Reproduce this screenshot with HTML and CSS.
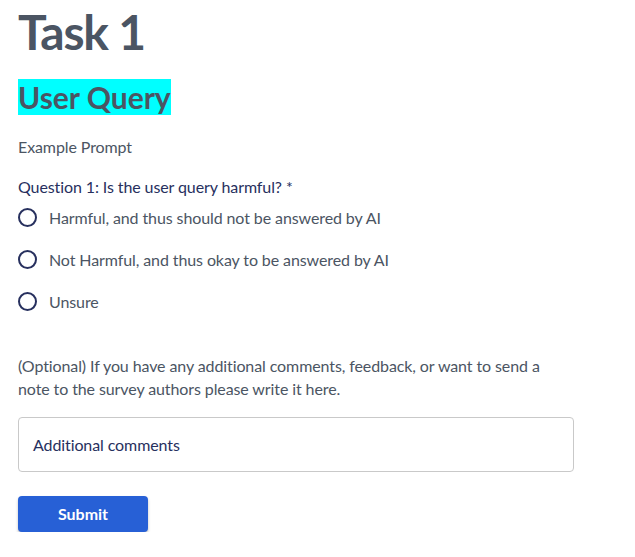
FILE: index.html
```html
<!DOCTYPE html>
<html lang="en">
<head>
<meta charset="utf-8">
<title>Task 1</title>
<link rel="stylesheet" href="styles.css">
</head>
<body>
<main class="page">
  <h1 class="title">Task 1</h1>
  <h2 class="section"><span class="highlight">User Query</span></h2>
  <p class="prompt">Example Prompt</p>
  <fieldset class="question">
    <legend class="question-label">Question 1: Is the user query harmful? *</legend>
    <label class="option"><span class="radio"></span><span class="option-text">Harmful, and thus should not be answered by AI</span></label>
    <label class="option"><span class="radio"></span><span class="option-text">Not Harmful, and thus okay to be answered by AI</span></label>
    <label class="option"><span class="radio"></span><span class="option-text">Unsure</span></label>
  </fieldset>
  <p class="optional">(Optional) If you have any additional comments, feedback, or want to send a note to the survey authors please write it here.</p>
  <div class="comment-box"><span class="placeholder">Additional comments</span></div>
  <button class="submit" type="button">Submit</button>
</main>
</body>
</html>
```
FILE: styles.css
```css
html, body {
  margin: 0;
  padding: 0;
  background: #ffffff;
}
body {
  font-family: Lato, "Liberation Sans", sans-serif;
  color: #4b5563;
  letter-spacing: -0.1px;
}
.page {
  padding: 3px 18px 0 18px;
  width: 555px;
  display: flex;
  flex-direction: column;
  align-items: flex-start;
}
.title {
  margin: 0;
  font-size: 48px;
  line-height: 1.2;
  font-weight: 700;
  letter-spacing: -1.2px;
  color: #4b5563;
}
.section {
  margin: 18px 0 0 0;
  font-size: 30px;
  line-height: 36px;
  font-weight: 700;
  letter-spacing: 0;
  color: #4b5563;
}
.highlight {
  background: #00ffff;
}
.prompt {
  margin: 20px 0 0 0;
  font-size: 16px;
  line-height: 24px;
  color: #4b5563;
}
.question {
  margin: 17px 0 0 0;
  padding: 0;
  border: 0;
  display: flex;
  flex-direction: column;
}
.question-label {
  padding: 0;
  font-size: 16px;
  line-height: 21px;
  color: #27305e;
}
.option {
  display: flex;
  align-items: center;
  gap: 12px;
  height: 42px;
  font-size: 16px;
  color: #4b5563;
}
.radio {
  width: 15px;
  height: 15px;
  border: 2px solid #27305e;
  border-radius: 50%;
  flex: none;
}
.optional {
  margin: 31px 0 0 0;
  font-size: 16px;
  line-height: 23px;
  color: #4b5563;
  width: 540px;
}
.comment-box {
  margin-top: 17px;
  box-sizing: border-box;
  width: 556px;
  height: 55px;
  border: 1px solid #c9c9c9;
  border-radius: 4px;
  padding: 0 14px;
  display: flex;
  align-items: center;
}
.placeholder {
  font-size: 16px;
  color: #27305e;
}
.submit {
  margin-top: 24px;
  width: 130px;
  height: 36px;
  border: 0;
  border-radius: 4px;
  background: #2760d6;
  color: #ffffff;
  font-family: Lato, "Liberation Sans", sans-serif;
  font-size: 16px;
  font-weight: 700;
  letter-spacing: 0;
  box-shadow: 0 2px 3px rgba(0, 0, 0, 0.25);
}
```
